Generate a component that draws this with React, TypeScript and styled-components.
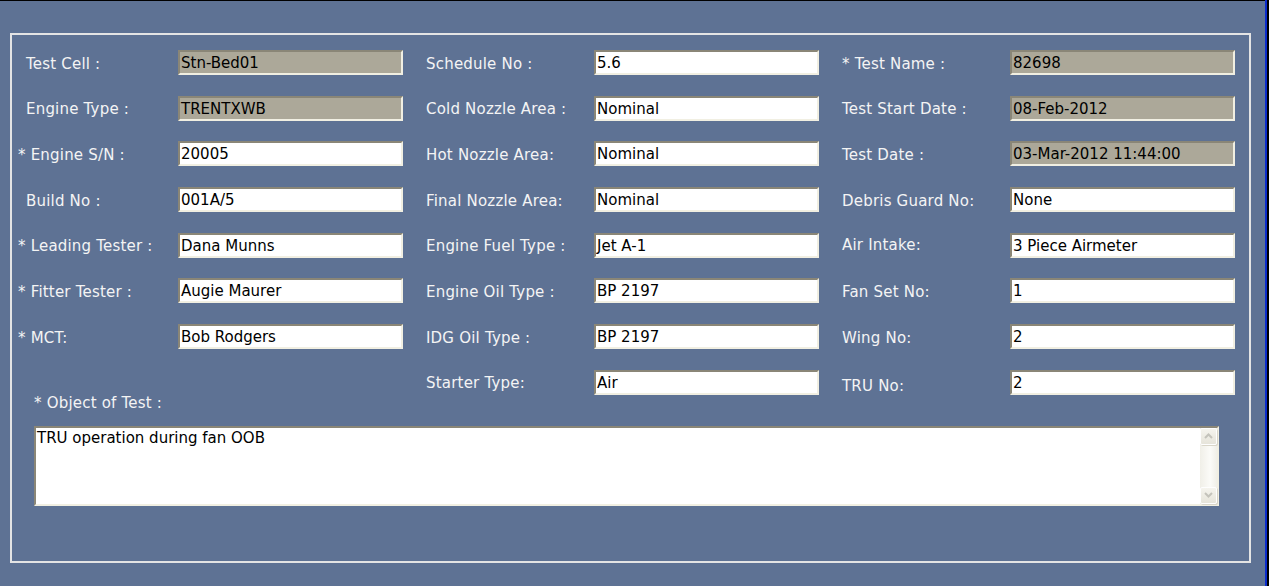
import React from "react";
import styled, { createGlobalStyle } from "styled-components";

const Global = createGlobalStyle`
  html, body { margin: 0; padding: 0; background: #5e7294; }
  body { font-family: "DejaVu Sans", "Liberation Sans", sans-serif; }
  * { box-sizing: border-box; }
`;

const Window = styled.div`
  display: flex;
  width: 1269px;
  height: 586px;
  background: #5e7294;
  overflow: hidden;
`;

const Main = styled.div`
  flex: 1;
  border-top: 1px solid #000;
  padding: 32px 14px 0 10px;
`;

const RightEdge = styled.div`
  width: 4px;
  border-left: 2px solid #0a2ccc;
  background: #000;
`;

const Panel = styled.div`
  width: 1241px;
  height: 530px;
  border: 2px solid #e4e4e4;
  padding: 15px 0 0 6px;
`;

const FieldGrid = styled.div`
  display: grid;
  grid-template-columns: 160px 225px 23px 168px 225px 23px 168px 225px;
  grid-auto-rows: 25px;
  row-gap: 20.7px;
`;

const Label = styled.div<{ $indent?: boolean; $col: number; $shift?: number }>`
  grid-column: ${(p) => (p.$col === 0 ? 1 : p.$col === 1 ? 4 : 7)};
  display: flex;
  align-items: center;
  padding-left: ${(p) => (p.$indent ? 8 : 0)}px;
  padding-top: ${(p) => 2 + Math.max(0, p.$shift ?? 0) * 2}px;
  padding-bottom: ${(p) => Math.max(0, -(p.$shift ?? 0)) * 2}px;
  color: #f4f4f4;
  font-size: 15px;
  letter-spacing: 0.2px;
  white-space: nowrap;
`;

const Field = styled.div<{ $col: number; $disabled?: boolean }>`
  grid-column: ${(p) => (p.$col === 0 ? 2 : p.$col === 1 ? 5 : 8)};
  background: ${(p) => (p.$disabled ? "#aca899" : "#ffffff")};
  border-style: solid;
  border-width: 2px;
  border-color: #8a8677 #f1efe2 #f1efe2 #8a8677;
  padding: 1px 1px 0;
  display: flex;
  align-items: center;
  color: #000;
  font-size: 15px;
  white-space: nowrap;
  overflow: hidden;
`;

const ObjectSection = styled.div`
  padding: 0 0 0 16px;
`;

const ObjectLabel = styled.div`
  color: #f4f4f4;
  font-size: 15px;
  letter-spacing: 0.2px;
  height: 17px;
  margin-bottom: 14px;
  display: flex;
  align-items: center;
`;

const TextArea = styled.div`
  width: 1185px;
  height: 80px;
  background: #fff;
  border-style: solid;
  border-width: 2px;
  border-color: #8a8677 #f1efe2 #f1efe2 #8a8677;
  display: flex;
`;

const TextBody = styled.div`
  flex: 1;
  padding: 1px 1px;
  font-size: 15px;
  color: #000;
`;

const ScrollBar = styled.div`
  width: 17px;
  display: flex;
  flex-direction: column;
  justify-content: space-between;
  background: linear-gradient(to right, #f0efe8, #fbfbf8 60%, #f0efe8);
`;

const ScrollButton = styled.div`
  width: 17px;
  height: 17px;
  border: 1px solid #fefefe;
  border-radius: 2px;
  background: linear-gradient(#f5f4ee, #e6e4da);
  box-shadow: 1px 1px 0 #d9d6c9;
  display: flex;
  align-items: center;
  justify-content: center;
`;

const Arrow = ({ down }: { down?: boolean }) => (
  <svg width="9" height="6" viewBox="0 0 9 6">
    <path
      d={down ? "M1 1 L4.5 4.5 L8 1" : "M1 5 L4.5 1.5 L8 5"}
      fill="none"
      stroke="#c4c3bb"
      strokeWidth="2"
    />
  </svg>
);

type Row = { label: string; req?: boolean; value: string; disabled?: boolean; shift?: number };

const col1: Row[] = [
  { label: "Test Cell :", value: "Stn-Bed01", disabled: true },
  { label: "Engine Type :", value: "TRENTXWB", disabled: true },
  { label: "* Engine S/N :", req: true, value: "20005" },
  { label: "Build No :", value: "001A/5" },
  { label: "* Leading Tester :", req: true, value: "Dana Munns" },
  { label: "* Fitter Tester :", req: true, value: "Augie Maurer" },
  { label: "* MCT:", req: true, value: "Bob Rodgers" },
];

const col2: Row[] = [
  { label: "Schedule No :", value: "5.6" },
  { label: "Cold Nozzle Area :", value: "Nominal" },
  { label: "Hot Nozzle Area:", value: "Nominal" },
  { label: "Final Nozzle Area:", value: "Nominal" },
  { label: "Engine Fuel Type :", value: "Jet A-1" },
  { label: "Engine Oil Type :", value: "BP 2197" },
  { label: "IDG Oil Type :", value: "BP 2197" },
  { label: "Starter Type:", value: "Air" },
];

const col3: Row[] = [
  { label: "* Test Name :", value: "82698", disabled: true },
  { label: "Test Start Date :", value: "08-Feb-2012", disabled: true },
  { label: "Test Date :", value: "03-Mar-2012 11:44:00", disabled: true },
  { label: "Debris Guard No:", value: "None" },
  { label: "Air Intake:", value: "3 Piece Airmeter", shift: -1 },
  { label: "Fan Set No:", value: "1" },
  { label: "Wing No:", value: "2" },
  { label: "TRU No:", value: "2", shift: 2.5 },
];

export default function App() {
  const rows: React.ReactNode[] = [];
  for (let i = 0; i < 8; i++) {
    [col1, col2, col3].forEach((col, c) => {
      const r = col[i];
      if (!r) return;
      rows.push(
        <Label
          key={`l${c}-${i}`}
          $col={c}
          $indent={c === 0 && !r.req}
          $shift={r.shift}
          style={{ gridRow: i + 1 }}
        >
          {r.label}
        </Label>,
        <Field key={`f${c}-${i}`} $col={c} $disabled={r.disabled} style={{ gridRow: i + 1 }}>
          {r.value}
        </Field>
      );
    });
  }
  return (
    <>
      <Global />
      <Window>
        <Main>
          <Panel>
            <FieldGrid>{rows}</FieldGrid>
            <ObjectSection>
              <ObjectLabel>* Object of Test :</ObjectLabel>
              <TextArea>
                <TextBody>TRU operation during fan OOB</TextBody>
                <ScrollBar>
                  <ScrollButton>
                    <Arrow />
                  </ScrollButton>
                  <ScrollButton>
                    <Arrow down />
                  </ScrollButton>
                </ScrollBar>
              </TextArea>
            </ObjectSection>
          </Panel>
        </Main>
        <RightEdge />
      </Window>
    </>
  );
}
